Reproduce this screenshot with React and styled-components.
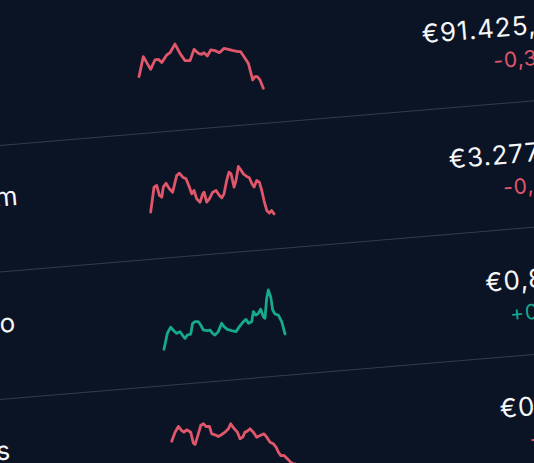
import React from 'react';
import styled, { createGlobalStyle } from 'styled-components';

const Global = createGlobalStyle`
  html, body {
    margin: 0;
    padding: 0;
    background: #0b1425;
  }
  body {
    font-family: Inter, "Noto Sans", sans-serif;
  }
`

const Stage = styled.div`
  width: 534px;
  height: 463px;
  overflow: hidden;
  background: #0b1425;
`

// the photo is tilted a little, so the whole list turns with it
const List = styled.div`
  width: 740px;
  margin-left: -120px;
  margin-top: -3px;
  transform-origin: 387px 234.5px;
  transform: rotate(-4.8deg);
`

const Row = styled.div`
  display: flex;
  align-items: flex-start;
  box-sizing: border-box;
  height: 126.5px;
  padding: 35px 34px 0 24px;
  border-bottom: 1px solid #333c4d;
`

const NameCol = styled.div`
  width: 248px;
  flex: none;
  display: flex;
  flex-direction: column;
`

const Name = styled.div`
  font-size: 26px;
  line-height: 32px;
  color: #f6f7f9;
`

const Symbol = styled.div`
  margin-top: 6px;
  font-size: 19px;
  line-height: 24px;
  color: #8891a3;
`

const Chart = styled.svg`
  flex: none;
  width: 124px;
  height: 52px;
  margin-top: 4px;
  overflow: visible;
`

const ValueCol = styled.div`
  flex: 1;
  display: flex;
  flex-direction: column;
  align-items: flex-end;
`

const Price = styled.div`
  font-size: 26px;
  line-height: 32px;
  letter-spacing: 1px;
  color: #f6f7f9;
  white-space: nowrap;
`

const Change = styled.div`
  margin-top: 5px;
  font-size: 21px;
  line-height: 24px;
  letter-spacing: 0.8px;
  white-space: nowrap;
  color: ${p => (p.$up ? '#17a98b' : '#e0566b')};
`

const coins = [
  {
    name: 'Bitcoin', symbol: 'BTC', price: '€91.425,36', change: '-0,32%', up: false,
    origin: [120, 20],
    pts: [[57,170],[70,110],[92,148],[105,120],[115,118],[125,128],[140,105],[150,98],[165,72],[180,100],[195,122],[210,122],[222,88],[235,100],[245,103],[252,98],[262,108],[272,90],[285,92],[298,98],[312,85],[325,88],[340,92],[355,95],[362,95],[375,115],[385,130],[398,180],[405,170],[412,170],[420,180],[430,205]],
  },
  {
    name: 'Ethereum', symbol: 'ETH', price: '€3.277,45', change: '-0,84%', up: false,
    origin: [130, 140],
    pts: [[62,215],[72,140],[80,135],[88,165],[95,170],[100,140],[108,128],[118,145],[128,155],[140,105],[148,98],[158,110],[168,115],[178,140],[185,160],[192,150],[200,175],[210,185],[218,160],[222,155],[230,185],[238,175],[248,155],[258,150],[268,165],[275,172],[282,160],[290,120],[297,95],[303,100],[312,140],[318,120],[325,78],[332,88],[340,100],[350,108],[358,112],[365,128],[372,140],[380,120],[388,125],[395,150],[402,180],[410,210],[418,218],[425,210],[432,220]],
  },
  {
    name: 'Cardano', symbol: 'ADA', price: '€0,8124', change: '+0,56%', up: true,
    origin: [150, 270],
    pts: [[42,238],[52,190],[62,172],[72,183],[80,190],[90,185],[97,195],[105,205],[112,195],[122,192],[128,160],[135,155],[145,155],[152,165],[160,180],[172,182],[180,180],[188,190],[195,195],[205,185],[215,160],[222,170],[232,178],[245,182],[258,185],[268,170],[280,155],[288,148],[296,160],[305,155],[310,125],[318,135],[325,130],[332,118],[340,140],[345,145],[350,85],[355,60],[362,80],[368,120],[375,132],[385,135],[395,155],[405,192]],
  },
  {
    name: 'Cronos', symbol: 'CRO', price: '€0,1374', change: '-1,27%', up: false,
    origin: [160, 400],
    pts: [[35,122],[45,95],[55,78],[65,90],[72,95],[80,88],[92,95],[100,128],[105,132],[112,110],[122,75],[130,70],[138,78],[148,78],[155,100],[165,103],[175,108],[185,102],[195,95],[205,85],[212,70],[220,82],[232,95],[240,115],[248,110],[255,95],[262,92],[270,85],[280,95],[290,110],[300,105],[312,100],[320,110],[330,125],[340,130],[348,140],[355,155],[362,165],[372,165],[382,175],[392,185],[400,190],[405,190],[420,200]],
  },
]

const ang = 4.8 * Math.PI / 180
const cos = Math.cos(ang)
const sin = Math.sin(ang)

// traced points are in screen space; turn them back into the row's own frame
const toLocal = (coin, i) =>
  coin.pts
    .map(([zx, zy]) => {
      const dx = coin.origin[0] + zx / 3 - 267
      const dy = coin.origin[1] + zy / 3 - 231.5
      const x = 267 + dx * cos - dy * sin - 152
      const y = 231.5 + dx * sin + dy * cos - (-3 + 126.5 * i + 39)
      return `${x.toFixed(1)},${y.toFixed(1)}`
    })
    .join(' ')

export default function App() {
  return (
    <Stage>
      <Global />
      <List>
        {coins.map((c, i) => (
          <Row key={c.symbol}>
            <NameCol>
              <Name>{c.name}</Name>
              <Symbol>{c.symbol}</Symbol>
            </NameCol>
            <Chart viewBox="0 0 124 52">
              <polyline
                points={toLocal(c, i)}
                fill="none"
                stroke={c.up ? '#17a98b' : '#e0566b'}
                strokeWidth="2.8"
                strokeLinejoin="round"
                strokeLinecap="round"
              />
            </Chart>
            <ValueCol>
              <Price>{c.price}</Price>
              <Change $up={c.up}>{c.change}</Change>
            </ValueCol>
          </Row>
        ))}
      </List>
    </Stage>
  )
}
